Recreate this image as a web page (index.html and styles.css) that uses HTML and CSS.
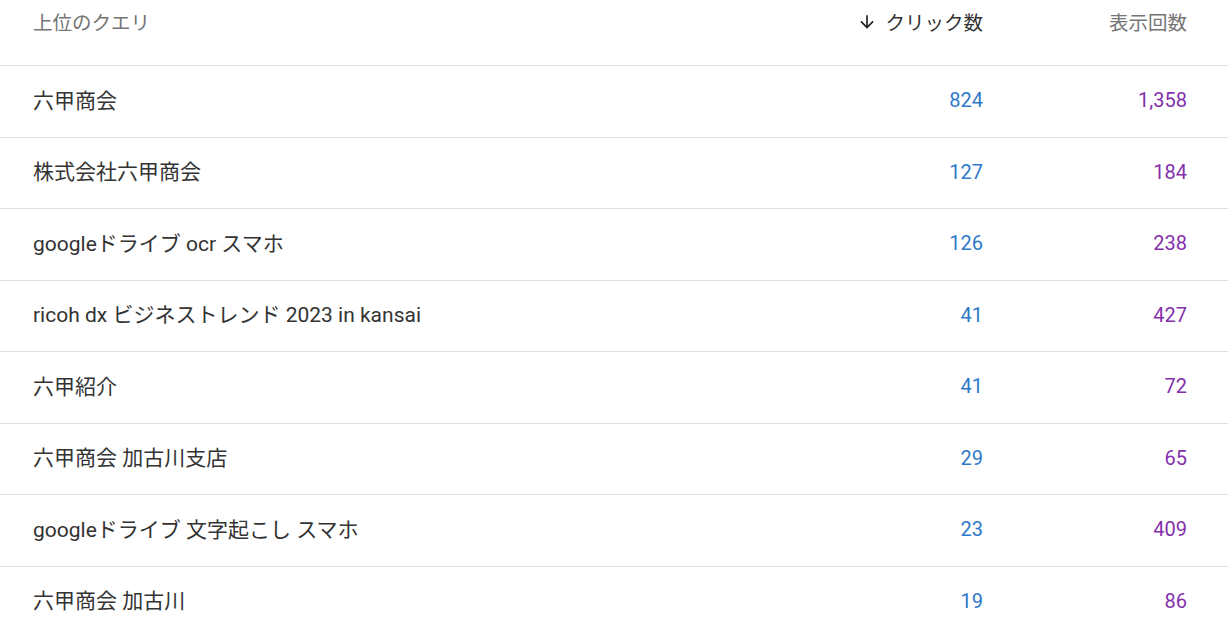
FILE: index.html
```html
<!DOCTYPE html>
<html lang="ja">
<head>
<meta charset="utf-8">
<link rel="stylesheet" href="styles.css">
</head>
<body>
<div class="table">
  <div class="row head">
    <div class="q">上位のクエリ</div>
    <div class="c sorted"><svg class="arrow" viewBox="0 0 24 24" width="20" height="20"><path d="M20 12l-1.41-1.41L13 16.17V4h-2v12.17l-5.58-5.59L4 12l8 8 8-8z" fill="#222"/></svg>クリック数</div>
    <div class="i">表示回数</div>
  </div>
  <div class="row"><div class="q">六甲商会</div><div class="c">824</div><div class="i">1,358</div></div>
  <div class="row"><div class="q">株式会社六甲商会</div><div class="c">127</div><div class="i">184</div></div>
  <div class="row"><div class="q">googleドライブ ocr スマホ</div><div class="c">126</div><div class="i">238</div></div>
  <div class="row"><div class="q">ricoh dx ビジネストレンド 2023 in kansai</div><div class="c">41</div><div class="i">427</div></div>
  <div class="row"><div class="q">六甲紹介</div><div class="c">41</div><div class="i">72</div></div>
  <div class="row"><div class="q">六甲商会 加古川支店</div><div class="c">29</div><div class="i">65</div></div>
  <div class="row"><div class="q">googleドライブ 文字起こし スマホ</div><div class="c">23</div><div class="i">409</div></div>
  <div class="row"><div class="q">六甲商会 加古川</div><div class="c">19</div><div class="i">86</div></div>
</div>
</body>
</html>
```
FILE: styles.css
```css
html, body {
  margin: 0;
  padding: 0;
  background: #fff;
}
body {
  font-family: Roboto, "Noto Sans CJK JP", sans-serif;
  font-size: 20px;
  color: #333;
  overflow: hidden;
}
.table {
  display: flex;
  flex-direction: column;
}
.row {
  display: flex;
  align-items: center;
  height: 71.5px;
  border-bottom: 1px solid #e0e0e0;
  padding: 0 41px 2px 33px;
  box-sizing: border-box;
}
.row.head {
  height: 66px;
  align-items: flex-start;
  padding-top: 7px;
  color: #757575;
  font-size: 19.5px;
}
.q {
  flex: 1;
  white-space: nowrap;
  font-size: 21px;
  margin-bottom: 3px;
}
.head .q {
  font-size: 19.5px;
  margin-bottom: 0;
}
.c {
  width: 160px;
  text-align: right;
  color: #2f79c9;
  display: flex;
  justify-content: flex-end;
  align-items: center;
}
.i {
  width: 204px;
  text-align: right;
  color: #8430ab;
}
.head .c, .head .i {
  color: #757575;
}
.head .c.sorted {
  color: #333;
}
.arrow {
  margin-right: 8px;
  margin-left: -2px;
}
```
